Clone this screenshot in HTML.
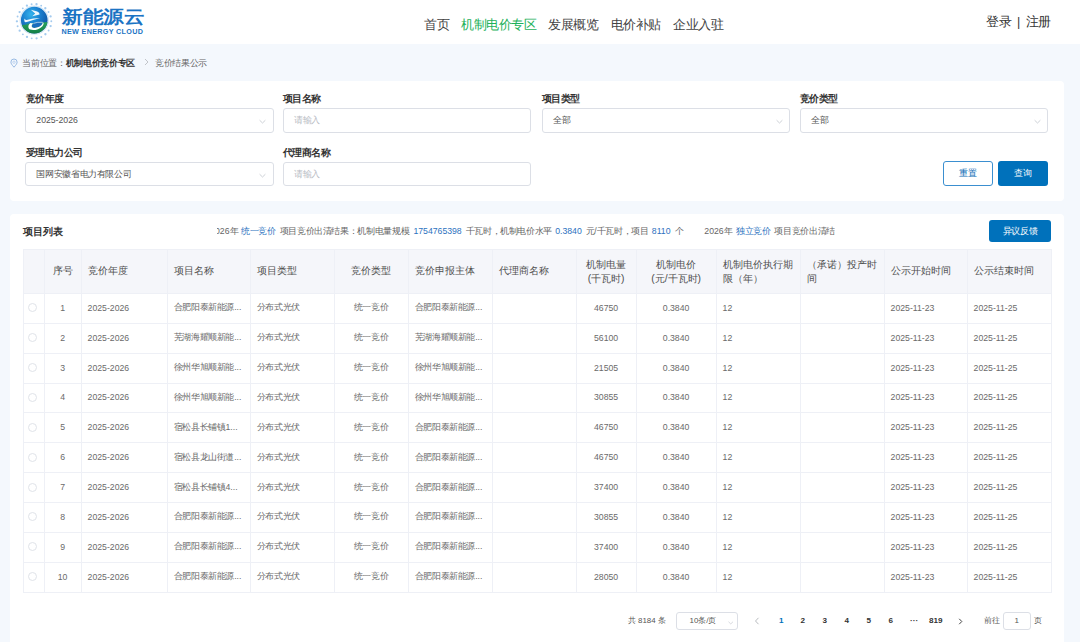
<!DOCTYPE html>
<html><head><meta charset="utf-8">
<style>
*{box-sizing:border-box;margin:0;padding:0}
html,body{width:1080px;height:642px;overflow:hidden}
body{background:#f4f8fd;font-family:"Liberation Sans",sans-serif;color:#333;position:relative;--zf:9px;--zl:-0.35px}
.abs{position:absolute;white-space:nowrap}
s.z{text-decoration:none;font-size:var(--zf);letter-spacing:var(--zl)}
#hdr{position:absolute;left:0;top:0;width:1080px;height:44px;background:#fff}
.logo-t{position:absolute;left:62px;top:3px;font-size:20.5px;font-weight:bold;color:#1b74c4;line-height:24px;--zf:21px;--zl:-0.3px;transform:scaleY(0.87);transform-origin:0 100%}
.logo-e{position:absolute;left:61.5px;top:26.5px;font-size:7.2px;font-weight:bold;color:#1b74c4;line-height:9px;letter-spacing:0.32px}
.nav{position:absolute;top:15.5px;font-size:12.9px;line-height:18px;color:#444;--zf:13px;--zl:-0.38px}
.nav span{position:absolute;white-space:nowrap}
.card{position:absolute;left:10px;width:1054px;background:#fff;border-radius:4px}
.lbl{position:absolute;font-size:9.4px;font-weight:bold;color:#333;line-height:12px;white-space:nowrap;--zf:10px;--zl:-0.6px}
.inp{position:absolute;width:248.3px;height:24.4px;border:1px solid #dcdfe6;border-radius:3px;background:#fff;font-size:8.7px;line-height:22px;padding-left:10px;color:#555;white-space:nowrap}
.inp.ph{color:#b8bcc4}
.chev{position:absolute;right:6.5px;top:9px;width:7px;height:7px}
.btn{position:absolute;height:24.4px;border-radius:3px;font-size:8.7px;line-height:24.5px;text-align:center}
table{position:absolute;left:12.6px;top:35px;border-collapse:collapse;table-layout:fixed;width:1028px}
th,td{border:1px solid #eef0f6;overflow:hidden;white-space:nowrap}
th{background:#f5f6fa;height:43.9px;font-size:10.36px;font-weight:normal;color:#505050;text-align:left;padding:0 6px 0 6px;line-height:14.3px;white-space:normal;--zf:10px;--zl:0px}
th.two{padding-top:1.5px}
tr{height:29.88px}
td{font-size:8.7px;color:#6a6a6a;padding:0 6px 1px 6px}
td:first-child,th:first-child{padding:0}
.c{text-align:center}
.radio{display:block;margin:0 auto;width:9px;height:9px;border:1px solid #e0e3e9;border-radius:50%;position:relative;left:-1px;top:-0.5px}
.pg{position:absolute;font-size:7.9px;line-height:16px;color:#555;white-space:nowrap;--zf:8px;--zl:0px}
.pn{position:absolute;font-size:8.1px;font-weight:bold;line-height:16px;color:#333}
</style></head><body>
<div id="hdr">
  <svg style="position:absolute;left:14px;top:1px" width="40" height="40" viewBox="0 0 40 40">
    <defs>
      <radialGradient id="gb" cx="0.38" cy="0.28" r="0.75"><stop offset="0" stop-color="#35b3ec"/><stop offset="0.45" stop-color="#1a80d0"/><stop offset="1" stop-color="#0b4e9e"/></radialGradient>
      <linearGradient id="gg" x1="0" y1="0" x2="0" y2="1"><stop offset="0" stop-color="#27a35b"/><stop offset="1" stop-color="#0d7440"/></linearGradient>
      <clipPath id="cc"><circle cx="20.25" cy="19.15" r="13.3"/></clipPath>
    </defs>
    <g fill="#a3caee"><circle cx="22.50" cy="3.27" r="1.15"/><circle cx="27.20" cy="4.63" r="0.95"/><circle cx="31.33" cy="7.27" r="1.15"/><circle cx="34.54" cy="10.96" r="0.95"/><circle cx="36.59" cy="15.41" r="1.15"/><circle cx="37.30" cy="20.25" r="0.95"/><circle cx="36.62" cy="25.10" r="1.15"/><circle cx="34.60" cy="29.56" r="0.95"/><circle cx="31.40" cy="33.27" r="1.15"/><circle cx="27.29" cy="35.93" r="0.95"/><circle cx="22.60" cy="37.32" r="1.15"/><circle cx="17.70" cy="37.33" r="0.95"/><circle cx="13.00" cy="35.97" r="1.15"/><circle cx="8.87" cy="33.33" r="0.95"/><circle cx="5.66" cy="29.64" r="1.15"/><circle cx="3.61" cy="25.19" r="0.95"/><circle cx="2.90" cy="20.35" r="1.15"/><circle cx="3.58" cy="15.50" r="0.95"/><circle cx="5.60" cy="11.04" r="1.15"/><circle cx="8.80" cy="7.33" r="0.95"/><circle cx="12.91" cy="4.67" r="1.15"/><circle cx="17.60" cy="3.28" r="0.95"/></g>
    <circle cx="20.25" cy="19.15" r="14.1" fill="none" stroke="#d3e6f6" stroke-width="1.2"/>
    <circle cx="20.25" cy="19.15" r="13.3" fill="url(#gb)"/>
    <path d="M4 24.8 Q20 21.5 38 20.8 L38 36 L4 36 Z" fill="url(#gg)" clip-path="url(#cc)"/>
    <path d="M16.8 8.7 L23.2 10.6 Q25.8 11.8 25.6 13.4 L18.2 15.3 L21.2 12.4 Z" fill="#fff" opacity="0.93"/>
    <path d="M10.4 17.6 Q11.2 19.2 12.6 18.9 Q19 17 26.2 16.9 Q19.5 18.6 14.5 20.4 Q11.2 21.8 10.6 20.8 Q10.1 19.4 10.4 17.6 Z" fill="#fff" opacity="0.92"/>
    <path d="M19.4 22.4 Q23.5 20.8 28.6 21.3 C29.2 22.6 27.6 24.6 25.2 25.8 C22.4 27.1 19.2 27.4 18.2 26.2 C17.3 25.1 17.8 23.4 19.4 22.4 Z" fill="#1a6cbc"/><path d="M16.6 21.9 C13.8 23.6 13.6 27.4 16.4 28.6 C19.6 29.9 25.2 28.4 28.2 25.4 C29.9 23.7 30.2 21.8 28.6 21.3 C29.2 22.6 27.6 24.6 25.2 25.8 C22.4 27.1 19.2 27.4 18.2 26.2 C17.3 25.1 17.8 23.4 19.4 22.4 Z" fill="#fff"/><path d="M19.4 22.4 Q23.5 20.8 28.6 21.3" fill="none" stroke="#fff" stroke-width="0.7" opacity="0.85"/>
  </svg>
  <div class="logo-t"><s class="z">新能源云</s></div>
  <div class="logo-e">NEW ENERGY CLOUD</div>
  <div class="nav">
    <span style="left:424px"><s class="z">首页</s></span>
    <span style="left:461px;color:#1db15a"><s class="z">机制电价专区</s></span>
    <span style="left:548px"><s class="z">发展概览</s></span>
    <span style="left:610.5px"><s class="z">电价补贴</s></span>
    <span style="left:673px"><s class="z">企业入驻</s></span>
  </div>
  <div class="abs" style="left:986px;top:13px;font-size:12.6px;line-height:18px;color:#333;--zf:13px;--zl:-0.3px"><s class="z">登录</s> <span style="padding:0 2px">|</span> <s class="z">注册</s></div>
</div>

<div class="abs" style="left:10px;top:57px;font-size:8.7px;line-height:12px;color:#666">
  <svg width="8" height="10" viewBox="0 0 8 10" style="vertical-align:-2px"><path d="M4 9.2 C1.8 6.8 0.9 5.4 0.9 4.1 A3.1 3.1 0 0 1 7.1 4.1 C7.1 5.4 6.2 6.8 4 9.2 Z" fill="none" stroke="#8fb3e0" stroke-width="0.9"/><circle cx="4" cy="4.2" r="1.2" fill="none" stroke="#a9c6ea" stroke-width="0.7"/></svg>
  <span style="margin-left:2px"><s class="z">当前位置：</s></span><b style="color:#333"><s class="z">机制电价竞价专区</s></b><svg width="5" height="8" viewBox="0 0 5 8" style="margin:0 6px 0 9px;vertical-align:0px"><path d="M1 1 L4 4 L1 7" fill="none" stroke="#b5b8bd" stroke-width="0.8"/></svg><span style="--zl:-0.3px"><s class="z">竞价结果公示</s></span>
</div>

<div class="card" style="top:81px;height:120px">
  <div class="lbl" style="left:16px;top:12px"><s class="z">竞价年度</s></div>
  <div class="lbl" style="left:273px;top:12px"><s class="z">项目名称</s></div>
  <div class="lbl" style="left:532px;top:12px"><s class="z">项目类型</s></div>
  <div class="lbl" style="left:790px;top:12px"><s class="z">竞价类型</s></div>
  <div class="inp" style="left:15.3px;top:27.2px">2025-2026<svg class="chev" viewBox="0 0 7 7"><path d="M0.6 2.2 L3.5 5 L6.4 2.2" fill="none" stroke="#c0c4cc" stroke-width="0.8"/></svg></div>
  <div class="inp ph" style="left:273px;top:27.2px"><s class="z">请输入</s></div>
  <div class="inp" style="left:532px;top:27.2px"><s class="z">全部</s><svg class="chev" viewBox="0 0 7 7"><path d="M0.6 2.2 L3.5 5 L6.4 2.2" fill="none" stroke="#c0c4cc" stroke-width="0.8"/></svg></div>
  <div class="inp" style="left:790px;top:27.2px"><s class="z">全部</s><svg class="chev" viewBox="0 0 7 7"><path d="M0.6 2.2 L3.5 5 L6.4 2.2" fill="none" stroke="#c0c4cc" stroke-width="0.8"/></svg></div>
  <div class="lbl" style="left:16px;top:66px"><s class="z">受理电力公司</s></div>
  <div class="lbl" style="left:273px;top:66px"><s class="z">代理商名称</s></div>
  <div class="inp" style="left:15.3px;top:80.8px"><s class="z">国网安徽省电力有限公司</s><svg class="chev" viewBox="0 0 7 7"><path d="M0.6 2.2 L3.5 5 L6.4 2.2" fill="none" stroke="#c0c4cc" stroke-width="0.8"/></svg></div>
  <div class="inp ph" style="left:273px;top:80.8px"><s class="z">请输入</s></div>
  <div class="btn" style="left:933px;top:80.2px;width:50px;border:1px solid #3b8fd0;color:#0b6cb5;background:#fff;line-height:22.5px"><s class="z">重置</s></div>
  <div class="btn" style="left:988px;top:80.2px;width:50px;background:#0071bb;color:#fff"><s class="z">查询</s></div>
</div>

<div class="card" style="top:214px;height:440px">
  <div class="abs" style="left:13px;top:11px;font-size:10px;font-weight:bold;line-height:14px;color:#333;--zf:10px;--zl:0px"><s class="z">项目列表</s></div>
  <div class="mq" style="position:absolute;left:206.5px;top:10px;width:618.5px;height:14px;overflow:hidden;font-size:8.7px;line-height:14px;color:#666"><span class="abs" style="left:-6.3px;top:0">2026<s class="z">年</s></span><span class="abs" style="left:24.4px;top:0;color:#2d72c0"><s class="z">统一竞价</s></span><span class="abs" style="left:63.1px;top:0"><s class="z">项目竞价出清结果：机制电量规模</s></span><span class="abs" style="left:196.9px;top:0;color:#2d72c0">1754765398</span><span class="abs" style="left:249.1px;top:0"><s class="z">千瓦时，机制电价水平</s></span><span class="abs" style="left:338.7px;top:0;color:#2d72c0">0.3840</span><span class="abs" style="left:369.0px;top:0"><s class="z">元</s>/<s class="z">千瓦时，项目</s></span><span class="abs" style="left:435.3px;top:0;color:#2d72c0">8110</span><span class="abs" style="left:458.1px;top:0"><s class="z">个</s></span><span class="abs" style="left:487.8px;top:0">2026<s class="z">年</s></span><span class="abs" style="left:519.6px;top:0;color:#2d72c0"><s class="z">独立竞价</s></span><span class="abs" style="left:557.9px;top:0"><s class="z">项目竞价出清结果</s></span></div>
  <div class="btn" style="left:979px;top:6px;width:62px;height:22px;line-height:22px;background:#0071bb;color:#fff"><s class="z">异议反馈</s></div>

  <table style="top:35px">
    <colgroup>
      <col style="width:21px"><col style="width:37px"><col style="width:86px"><col style="width:83px"><col style="width:84px"><col style="width:74px"><col style="width:84px"><col style="width:84px"><col style="width:60px"><col style="width:80px"><col style="width:84px"><col style="width:84px"><col style="width:83px"><col style="width:84px">
    </colgroup>
    <thead><tr>
      <th></th><th class="c"><s class="z">序号</s></th><th><s class="z">竞价年度</s></th><th><s class="z">项目名称</s></th><th><s class="z">项目类型</s></th><th class="c"><s class="z">竞价类型</s></th><th><s class="z">竞价申报主体</s></th><th><s class="z">代理商名称</s></th><th class="c two"><s class="z">机制电量</s><br>(<s class="z">千瓦时</s>)</th><th class="c two"><s class="z">机制电价</s><br>(<s class="z">元</s>/<s class="z">千瓦时</s>)</th><th class="two"><s class="z">机制电价执行期限（年）</s></th><th class="two"><s class="z">（承诺）投产时间</s></th><th><s class="z">公示开始时间</s></th><th><s class="z">公示结束时间</s></th>
    </tr></thead>
    <tbody id="tb">
<tr><td class="c"><i class="radio"></i></td><td class="c">1</td><td>2025-2026</td><td><s class="z">合肥阳泰新能源</s>...</td><td><s class="z">分布式光伏</s></td><td class="c"><s class="z">统一竞价</s></td><td><s class="z">合肥阳泰新能源</s>...</td><td></td><td class="c">46750</td><td class="c">0.3840</td><td>12</td><td></td><td>2025-11-23</td><td>2025-11-25</td></tr>
<tr><td class="c"><i class="radio"></i></td><td class="c">2</td><td>2025-2026</td><td><s class="z">芜湖海耀顺新能</s>...</td><td><s class="z">分布式光伏</s></td><td class="c"><s class="z">统一竞价</s></td><td><s class="z">芜湖海耀顺新能</s>...</td><td></td><td class="c">56100</td><td class="c">0.3840</td><td>12</td><td></td><td>2025-11-23</td><td>2025-11-25</td></tr>
<tr><td class="c"><i class="radio"></i></td><td class="c">3</td><td>2025-2026</td><td><s class="z">徐州华旭顺新能</s>...</td><td><s class="z">分布式光伏</s></td><td class="c"><s class="z">统一竞价</s></td><td><s class="z">徐州华旭顺新能</s>...</td><td></td><td class="c">21505</td><td class="c">0.3840</td><td>12</td><td></td><td>2025-11-23</td><td>2025-11-25</td></tr>
<tr><td class="c"><i class="radio"></i></td><td class="c">4</td><td>2025-2026</td><td><s class="z">徐州华旭顺新能</s>...</td><td><s class="z">分布式光伏</s></td><td class="c"><s class="z">统一竞价</s></td><td><s class="z">徐州华旭顺新能</s>...</td><td></td><td class="c">30855</td><td class="c">0.3840</td><td>12</td><td></td><td>2025-11-23</td><td>2025-11-25</td></tr>
<tr><td class="c"><i class="radio"></i></td><td class="c">5</td><td>2025-2026</td><td><s class="z">宿松县长铺镇</s>1...</td><td><s class="z">分布式光伏</s></td><td class="c"><s class="z">统一竞价</s></td><td><s class="z">合肥阳泰新能源</s>...</td><td></td><td class="c">46750</td><td class="c">0.3840</td><td>12</td><td></td><td>2025-11-23</td><td>2025-11-25</td></tr>
<tr><td class="c"><i class="radio"></i></td><td class="c">6</td><td>2025-2026</td><td><s class="z">宿松县龙山街道</s>...</td><td><s class="z">分布式光伏</s></td><td class="c"><s class="z">统一竞价</s></td><td><s class="z">合肥阳泰新能源</s>...</td><td></td><td class="c">46750</td><td class="c">0.3840</td><td>12</td><td></td><td>2025-11-23</td><td>2025-11-25</td></tr>
<tr><td class="c"><i class="radio"></i></td><td class="c">7</td><td>2025-2026</td><td><s class="z">宿松县长铺镇</s>4...</td><td><s class="z">分布式光伏</s></td><td class="c"><s class="z">统一竞价</s></td><td><s class="z">合肥阳泰新能源</s>...</td><td></td><td class="c">37400</td><td class="c">0.3840</td><td>12</td><td></td><td>2025-11-23</td><td>2025-11-25</td></tr>
<tr><td class="c"><i class="radio"></i></td><td class="c">8</td><td>2025-2026</td><td><s class="z">合肥阳泰新能源</s>...</td><td><s class="z">分布式光伏</s></td><td class="c"><s class="z">统一竞价</s></td><td><s class="z">合肥阳泰新能源</s>...</td><td></td><td class="c">30855</td><td class="c">0.3840</td><td>12</td><td></td><td>2025-11-23</td><td>2025-11-25</td></tr>
<tr><td class="c"><i class="radio"></i></td><td class="c">9</td><td>2025-2026</td><td><s class="z">合肥阳泰新能源</s>...</td><td><s class="z">分布式光伏</s></td><td class="c"><s class="z">统一竞价</s></td><td><s class="z">合肥阳泰新能源</s>...</td><td></td><td class="c">37400</td><td class="c">0.3840</td><td>12</td><td></td><td>2025-11-23</td><td>2025-11-25</td></tr>
<tr><td class="c"><i class="radio"></i></td><td class="c">10</td><td>2025-2026</td><td><s class="z">合肥阳泰新能源</s>...</td><td><s class="z">分布式光伏</s></td><td class="c"><s class="z">统一竞价</s></td><td><s class="z">合肥阳泰新能源</s>...</td><td></td><td class="c">28050</td><td class="c">0.3840</td><td>12</td><td></td><td>2025-11-23</td><td>2025-11-25</td></tr>
</tbody>
  </table>

  <div class="pg" style="left:617.8px;top:399px"><s class="z">共</s> 8184 <s class="z">条</s></div>
  <div class="abs" style="left:666px;top:398px;width:62px;height:18px;border:1px solid #dcdfe6;border-radius:3px;font-size:7.9px;line-height:16px;color:#555;padding-left:12.5px;--zf:8px;--zl:0px">10<s class="z">条</s>/<s class="z">页</s><svg class="chev" style="right:3.5px;top:6.5px;width:5.5px;height:5.5px" viewBox="0 0 7 7"><path d="M0.6 2.2 L3.5 5 L6.4 2.2" fill="none" stroke="#c0c4cc" stroke-width="0.8"/></svg></div>
  <svg class="abs" style="left:744px;top:403px" width="6" height="8" viewBox="0 0 6 8"><path d="M4.5 0.8 L1.5 4 L4.5 7.2" fill="none" stroke="#b0b3b8" stroke-width="0.9"/></svg>
  <div class="pn" style="left:769px;top:399px;color:#0071bb">1</div>
  <div class="pn" style="left:790.5px;top:399px">2</div>
  <div class="pn" style="left:812.5px;top:399px">3</div>
  <div class="pn" style="left:834.5px;top:399px">4</div>
  <div class="pn" style="left:856.5px;top:399px">5</div>
  <div class="pn" style="left:878.5px;top:399px">6</div>
  <div class="pn" style="left:900px;top:399px">···</div>
  <div class="pn" style="left:919px;top:399px">819</div>
  <svg class="abs" style="left:947.5px;top:403.5px" width="5" height="7" viewBox="0 0 5 7"><path d="M1.2 0.8 L3.8 3.5 L1.2 6.2" fill="none" stroke="#444" stroke-width="1"/></svg>
  <div class="pg" style="left:974px;top:399px"><s class="z">前往</s></div>
  <div class="abs" style="left:992.5px;top:398px;width:28.5px;height:17.5px;border:1px solid #dcdfe6;border-radius:3px;font-size:8px;line-height:16px;color:#555;text-align:center">1</div>
  <div class="pg" style="left:1024px;top:399px"><s class="z">页</s></div>
</div>
</body></html>
